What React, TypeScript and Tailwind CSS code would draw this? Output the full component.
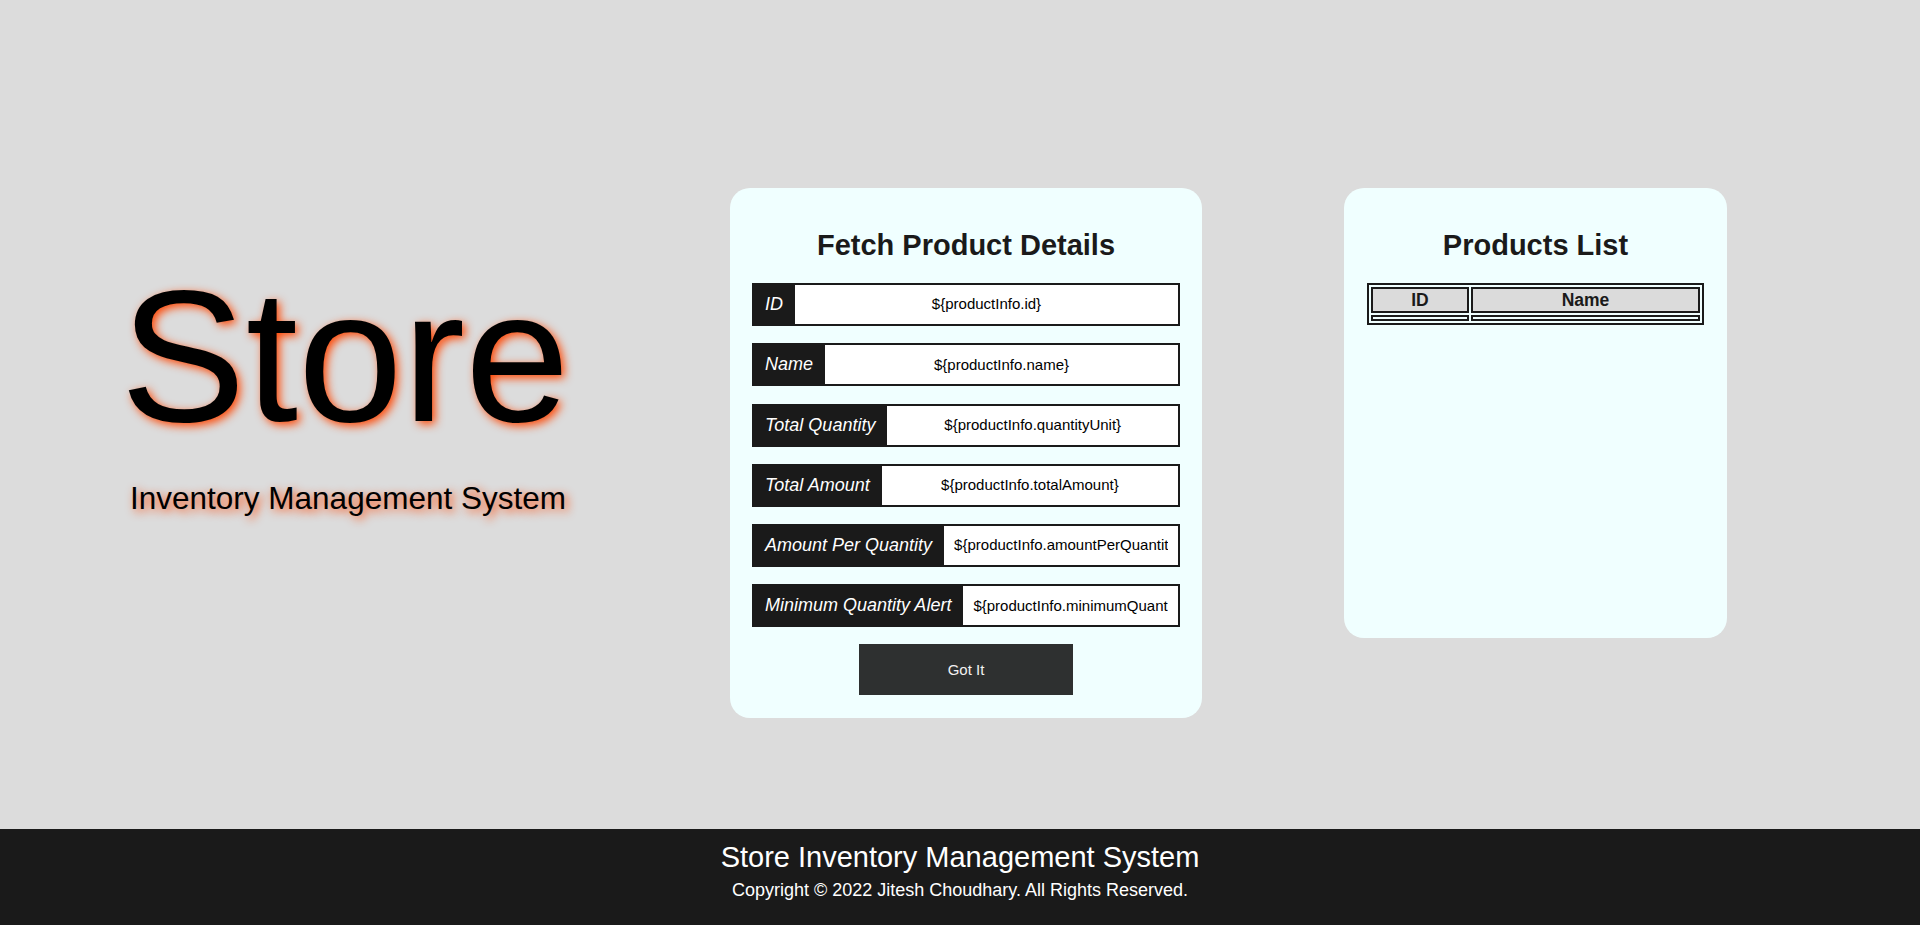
import React from "react";

const rows: { label: string; value: string }[] = [
  { label: "ID", value: "${productInfo.id}" },
  { label: "Name", value: "${productInfo.name}" },
  { label: "Total Quantity", value: "${productInfo.quantityUnit}" },
  { label: "Total Amount", value: "${productInfo.totalAmount}" },
  { label: "Amount Per Quantity", value: "${productInfo.amountPerQuantity}" },
  { label: "Minimum Quantity Alert", value: "${productInfo.minimumQuantityAlert}" },
];

export default function App() {
  return (
    <div className="w-full min-h-screen flex flex-col bg-[#dcdcdc] font-['Liberation_Sans',Arial,sans-serif]">
      <main className="h-[829px] flex items-start pt-[188px]">
        <div className="w-[690px] mt-[74px] flex flex-col items-center">
          <div className="text-[188px] leading-none text-black [text-shadow:3px_3px_10px_#ff4500]">Store</div>
          <div className="mt-[33px] pl-[6px] text-[31.5px] leading-none text-black [text-shadow:3px_3px_10px_#ff4500]">
            Inventory Management System
          </div>
        </div>

        <section className="ml-[40px] w-[472px] h-[530px] rounded-[20px] bg-[#f0ffff] px-[22px] pt-[43px] flex flex-col">
          <h1 className="text-center text-[29px] leading-none font-bold text-[#1a1a1a]">Fetch Product Details</h1>
          <div className="mt-[23px] flex flex-col gap-[17.3px]">
            {rows.map((r) => (
              <div key={r.label} className="h-[43px] flex border-2 border-[#1a1a1a] bg-[#1a1a1a]">
                <span className="shrink-0 flex items-center pl-[11px] pr-[12px] text-[18px] italic text-white whitespace-nowrap">
                  {r.label}
                </span>
                <input
                  readOnly
                  value={r.value}
                  className="flex-1 min-w-0 bg-white text-center text-[15px] text-black px-[10px] outline-none font-['Liberation_Sans',Arial,sans-serif]"
                />
              </div>
            ))}
          </div>
          <button className="mt-[17px] self-center w-[214px] h-[51px] bg-[#2e3030] text-[#f2f2f2] text-[15px]">
            Got It
          </button>
        </section>

        <section className="ml-[142px] w-[383px] h-[450px] rounded-[20px] bg-[#f0ffff] px-[23px] pt-[43px]">
          <h1 className="text-center text-[29px] leading-none font-bold text-[#1a1a1a]">Products List</h1>
          <table className="mt-[23px] w-full border-2 border-[#1a1a1a] border-separate border-spacing-[2px]">
            <thead>
              <tr>
                <th className="w-[98px] border-2 border-[#1a1a1a] bg-[#dbdbdb] p-[1px] text-[17.5px] leading-[1.15] font-bold text-[#1a1a1a]">ID</th>
                <th className="border-2 border-[#1a1a1a] bg-[#dbdbdb] p-[1px] text-[17.5px] leading-[1.15] font-bold text-[#1a1a1a]">Name</th>
              </tr>
            </thead>
            <tbody>
              <tr>
                <td className="border-2 border-[#1a1a1a] p-0 h-[6px] leading-none text-[0px]"></td>
                <td className="border-2 border-[#1a1a1a] p-0 h-[6px] leading-none text-[0px]"></td>
              </tr>
            </tbody>
          </table>
        </section>
      </main>

      <footer className="h-[96px] bg-[#1a1a1a] flex flex-col items-center pt-[14px] text-white">
        <div className="text-[29px] leading-none">Store Inventory Management System</div>
        <div className="mt-[8.5px] text-[18px] leading-none">Copyright © 2022 Jitesh Choudhary. All Rights Reserved.</div>
      </footer>
    </div>
  );
}
